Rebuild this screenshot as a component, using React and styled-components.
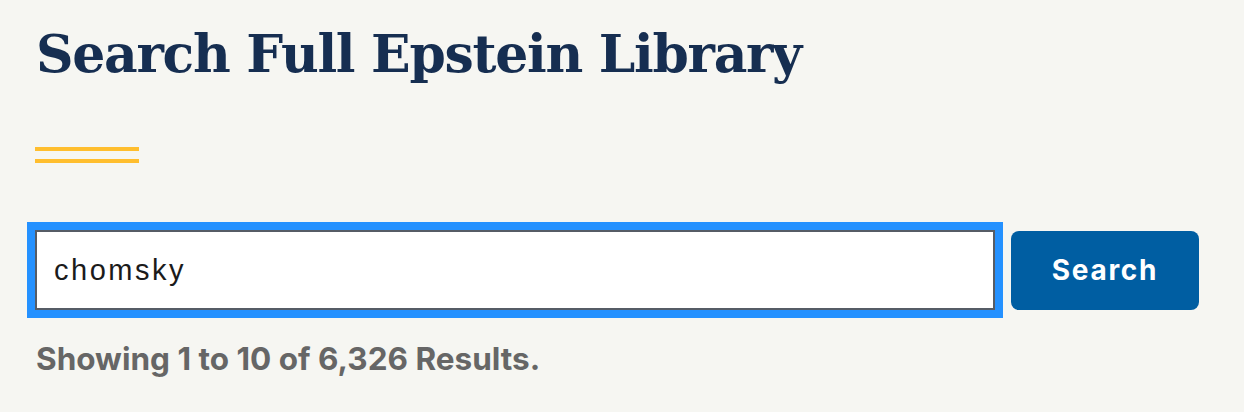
import React from "react";
import styled, { createGlobalStyle } from "styled-components";

const Global = createGlobalStyle`
  html, body { margin: 0; padding: 0; background: #f6f6f2; }
  body { font-family: "Inter", "Liberation Sans", sans-serif; min-height: 100vh; }
`;

const Page = styled.main`
  padding: 14px 36px 24px 36px;
  display: flex;
  flex-direction: column;
`;

const Title = styled.h1`
  margin: 0;
  font-family: "DejaVu Serif", serif;
  font-weight: 700;
  font-size: 52px;
  line-height: 80px;
  letter-spacing: -1.3px;
  color: #162e51;
`;

const Accent = styled.div`
  margin-top: 53px;
  width: 104px;
  margin-left: -1px;
  display: flex;
  flex-direction: column;
  gap: 8px;
`;

const AccentLine = styled.span`
  display: block;
  height: 4px;
  background: #ffbe2e;
`;

const Form = styled.form`
  margin-top: 67px;
  display: flex;
  align-items: center;
  gap: 16px;
`;

const Input = styled.input`
  box-sizing: border-box;
  width: 960px;
  height: 80px;
  margin: 0 0 0 -1px;
  padding: 0 16px 0 17px;
  border: 2px solid #565c65;
  outline: 8px solid #2491ff;
  background: #fff;
  font-family: "Liberation Sans", Arial, sans-serif;
  font-size: 29px;
  letter-spacing: 2.5px;
  color: #1b1b1b;
`;

const Button = styled.button`
  box-sizing: border-box;
  width: 188px;
  height: 79px;
  border: 0;
  border-radius: 8px;
  background: #005ea2;
  color: #fff;
  font-family: "Inter", "Liberation Sans", sans-serif;
  font-weight: 700;
  font-size: 28px;
  letter-spacing: 1.7px;
  cursor: pointer;
`;

const Results = styled.p`
  margin: 29px 0 0 0;
  font-family: "Inter", "Liberation Sans", sans-serif;
  font-weight: 700;
  font-size: 31.5px;
  line-height: 40px;
  color: #666666;
`;

export default function App() {
  return (
    <>
      <Global />
      <Page>
        <Title>Search Full Epstein Library</Title>
        <Accent>
          <AccentLine />
          <AccentLine />
        </Accent>
        <Form onSubmit={(e) => e.preventDefault()}>
          <Input type="text" defaultValue="chomsky" aria-label="Search" />
          <Button type="submit">Search</Button>
        </Form>
        <Results>Showing 1 to 10 of 6,326 Results.</Results>
      </Page>
    </>
  );
}
